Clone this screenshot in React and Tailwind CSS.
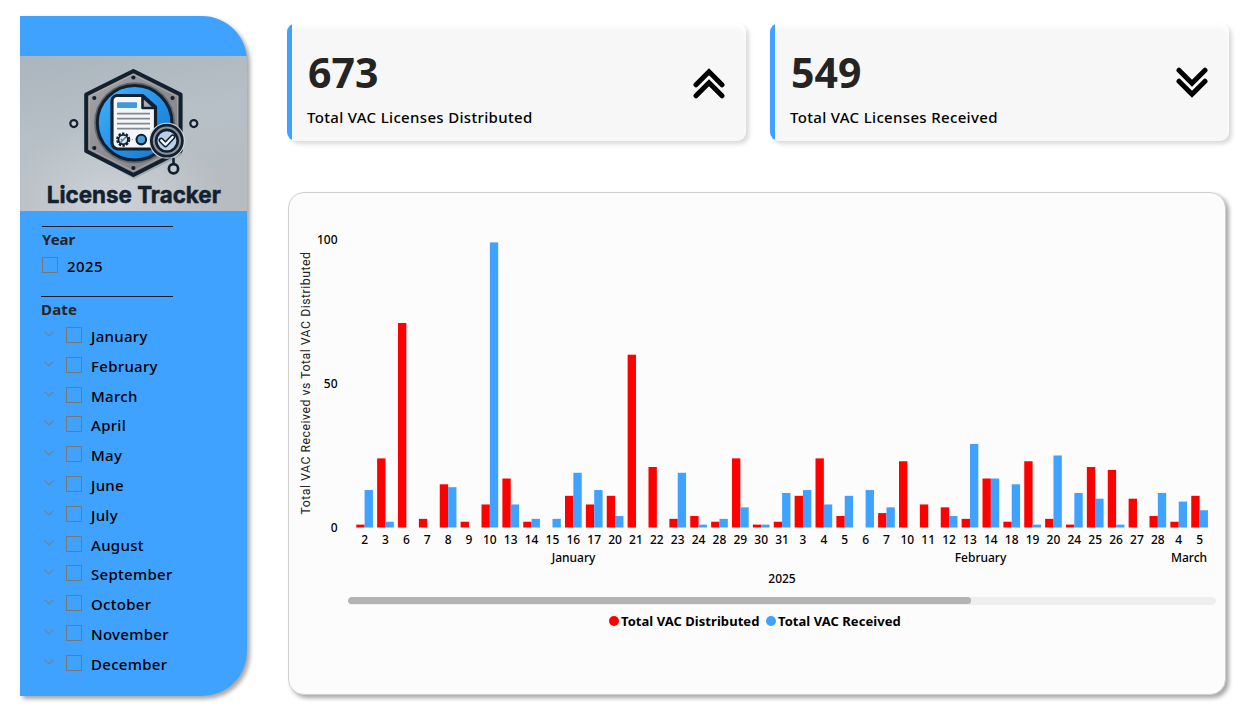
import React from "react";

const DATA = [
  [2, 1, 13], [3, 24, 2], [6, 71, 0], [7, 3, 0], [8, 15, 14], [9, 2, 0], [10, 8, 99],
  [13, 17, 8], [14, 2, 3], [15, 0, 3], [16, 11, 19], [17, 8, 13], [20, 11, 4], [21, 60, 0],
  [22, 21, 0], [23, 3, 19], [24, 4, 1], [28, 2, 3], [29, 24, 7], [30, 1, 1], [31, 2, 12],
  [3, 11, 13], [4, 24, 8], [5, 4, 11], [6, 0, 13], [7, 5, 7], [10, 23, 0], [11, 8, 0],
  [12, 7, 4], [13, 3, 29], [14, 17, 17], [18, 2, 15], [19, 23, 1], [20, 3, 25], [24, 1, 12],
  [25, 21, 10], [26, 20, 1], [27, 10, 0], [28, 4, 12], [4, 2, 9], [5, 11, 6],
];

const MONTHS = [
  "January", "February", "March", "April", "May", "June",
  "July", "August", "September", "October", "November", "December",
];

function Logo() {
  return (
    <svg className="block h-[155px] w-full" viewBox="20 56 227 155" preserveAspectRatio="none">
      <defs>
        <linearGradient id="wall" x1="0" y1="0" x2="0.3" y2="1">
          <stop offset="0" stopColor="#abb5bd" />
          <stop offset="0.55" stopColor="#b7c0c7" />
          <stop offset="1" stopColor="#b6bcc0" />
        </linearGradient>
        <radialGradient id="glow" cx="0.4" cy="0.95" r="0.5">
          <stop offset="0" stopColor="#cdd3d8" />
          <stop offset="1" stopColor="#cdd3d8" stopOpacity="0" />
        </radialGradient>
        <linearGradient id="steel" x1="0" y1="0" x2="1" y2="1">
          <stop offset="0" stopColor="#aaa7a7" />
          <stop offset="0.5" stopColor="#8d8c90" />
          <stop offset="1" stopColor="#838287" />
        </linearGradient>
        <linearGradient id="disc" x1="0" y1="0" x2="1" y2="1">
          <stop offset="0" stopColor="#49b5fb" />
          <stop offset="0.5" stopColor="#2493ea" />
          <stop offset="1" stopColor="#1674cb" />
        </linearGradient>
      </defs>
      <rect x="20" y="56" width="227" height="155" fill="url(#wall)" />
      <rect x="20" y="56" width="227" height="155" fill="url(#glow)" />
      <path d="M134 72 L182 94 V155 L134 179 L88 153 Z" fill="#8f999f" opacity="0.6" />
      <path d="M133.400 71 L180.600 94.500 V151 L133.400 175 L86.200 151 V94.500 Z" fill="url(#steel)" stroke="#12202f" strokeWidth="4" strokeLinejoin="round" />
      <path d="M133.400 74.500 L177.500 96.500 V149 L133.400 171 L89.200 149 V96.500 Z" fill="none" stroke="#c3c1bf" strokeWidth="0.8" opacity="0.6" />
      <circle cx="134.600" cy="122.800" r="40.500" fill="#5f6670" />
      <circle cx="134.600" cy="122.800" r="37.300" fill="url(#disc)" stroke="#12202f" strokeWidth="3" />
      {[[133.4, 77.5], [94.3, 98], [172.5, 98], [94.3, 148], [133.4, 168]].map(([x, y]) => (
        <circle key={x + "-" + y} cx={x} cy={y} r="2.100" fill="#12202f" />
      ))}
      <circle cx="73.800" cy="123.600" r="3.500" fill="#c5ccd1" stroke="#12202f" strokeWidth="2.200" />
      <circle cx="193.800" cy="123.600" r="3.500" fill="#c5ccd1" stroke="#12202f" strokeWidth="2.200" />
      <path d="M117 95.500 H142.500 L155.500 107 V143 a6 6 0 0 1 -6 6 H118 a6 6 0 0 1 -6 -6 V101 a5.500 5.500 0 0 1 5 -5.500 Z" fill="#f4f7f9" stroke="#12202f" strokeWidth="3.200" strokeLinejoin="round" />
      <path d="M142.500 96.500 V108 H155 Z" fill="#a9adb2" stroke="#12202f" strokeWidth="2.600" strokeLinejoin="round" />
      <rect x="117" y="102.300" width="20" height="5.800" rx="0.800" fill="#3f9ae0" />
      {[113.6, 118.6, 123.6, 128.6].map((y) => (
        <path key={y} d={`M117 ${y} H150`} stroke="#85898e" strokeWidth="1.900" />
      ))}
      <circle cx="123.200" cy="139.600" r="6" fill="none" stroke="#12202f" strokeWidth="2.200" strokeDasharray="2.400 1.370" />
      <circle cx="123.200" cy="139.600" r="4.700" fill="#dcecf7" stroke="#12202f" strokeWidth="1.800" />
      <path d="M120.500 142.500 L126 137 M121 139 l2 2" stroke="#5c7d99" strokeWidth="1.700" />
      <circle cx="132.300" cy="139.600" r="0.600" fill="#7e8b96" />
      <circle cx="141.300" cy="139.600" r="4.800" fill="#45a0df" stroke="#12202f" strokeWidth="2.100" />
      <path d="M173.500 158 V164" stroke="#12202f" strokeWidth="2.600" />
      <circle cx="173.500" cy="168.700" r="4.600" fill="#c2ccd3" stroke="#12202f" strokeWidth="2.700" />
      <circle cx="166.900" cy="140.700" r="18" fill="#d5dadd" />
      <circle cx="166.900" cy="140.700" r="15.500" fill="#8b9299" stroke="#12202f" strokeWidth="2.800" />
      <circle cx="166.900" cy="140.700" r="10.800" fill="#b6d1e9" stroke="#12202f" strokeWidth="2.600" />
      <path d="M161.300 140.300 L165.500 144.600 L172.700 137" fill="none" stroke="#12202f" strokeWidth="5.400" strokeLinecap="round" strokeLinejoin="round" />
      <path d="M161.300 140.300 L165.500 144.600 L172.700 137" fill="none" stroke="#eff4f8" strokeWidth="2.400" strokeLinecap="round" strokeLinejoin="round" />
      <text x="46.800" y="203.400" textLength="174" lengthAdjust="spacingAndGlyphs" fill="#12202f" stroke="#12202f" strokeWidth="0.500" className="font-['Inter'] text-[23.5px] font-bold">
        License Tracker
      </text>
    </svg>
  );
}

function Checkbox() {
  return <span className="block size-4 shrink-0 border border-[#777]" />;
}

function Sidebar() {
  return (
    <aside className="h-[680px] w-[227px] shrink-0 overflow-hidden rounded-r-[45px] bg-[#40a2ff] pt-10 shadow-[3px_3px_4px_rgba(0,0,0,0.35)]">
      <Logo />
      <div className="pt-[15px] pl-[22px]">
        <div className="w-[131px] border-t border-[#111c2a]" />
        <h2 className="mt-[2px] text-[15px] leading-5 font-bold text-[#252423]">Year</h2>
        <div className="mt-[6px] flex h-5 items-center gap-[9px]">
          <Checkbox />
          <span className="pt-[2px] text-[15px] leading-5 font-medium tracking-[0.4px]">2025</span>
        </div>
      </div>
      <div className="pt-[21px] pl-[21px]">
        <div className="w-[132px] border-t border-[#111c2a]" />
        <h2 className="mt-[2px] text-[15px] leading-5 font-bold tracking-[0.2px] text-[#252423]">Date</h2>
        <ul className="mt-px">
          {MONTHS.map((m) => (
            <li key={m} className="flex h-[29.82px] items-center">
              <svg className="-mt-[2px] ml-[3px] h-[6px] w-[10px] shrink-0" viewBox="0 0 10 6">
                <path d="M0.500 0.500 L5 5 L9.500 0.500" fill="none" stroke="#6e8497" strokeWidth="1.200" />
              </svg>
              <span className="ml-3 pr-[9px]"><Checkbox /></span>
              <span className="pt-[2px] text-[15px] leading-5 font-medium tracking-[0.3px]">{m}</span>
            </li>
          ))}
        </ul>
      </div>
    </aside>
  );
}

function DoubleChevron({ down }) {
  return (
    <svg className="h-[31px] w-8" viewBox="0 0 32 31">
      <g transform={down ? "rotate(180 16 15.500)" : undefined} fill="none" stroke="#000" strokeWidth="5" strokeLinecap="round">
        <path d="M3 16.800 L16 3.800 L29 16.800" />
        <path d="M3 27.800 L16 14.800 L29 27.800" />
      </g>
    </svg>
  );
}

function StatCard({ value, label, down }) {
  return (
    <section className="flex h-[118px] w-[459px] overflow-hidden rounded-[9px] bg-[#f7f7f7] pr-[21px] shadow-[3px_3px_4px_rgba(0,0,0,0.15),inset_0_4px_4px_#fff]">
      <div className="w-[5px] bg-[#40a2ff]" />
      <div className="flex-1 pt-[23px] pl-[15px]">
        <div className="pl-px text-[41px] leading-[52px] font-bold text-[#252423]">{value}</div>
        <div className="mt-[9px] text-[15px] leading-5 font-medium tracking-[0.33px] text-black">{label}</div>
      </div>
      <div className={down ? "pt-[44px]" : "pt-[45px]"}>
        <DoubleChevron down={down} />
      </div>
    </section>
  );
}

const PITCH = 20.875;
const BASE = 527.5;
const UNIT = 2.88;

function Plot() {
  return (
    <svg className="block h-[404px] w-[936px]" viewBox="289 193 936 404">
      <text transform="translate(309.500 514.500) rotate(-90)" textLength="262.500" fill="#252423" className="font-['Roboto'] text-[12.3px]">
        Total VAC Received vs Total VAC Distributed
      </text>
      <g className="text-[12px] font-medium" fill="#000">
        {[0, 50, 100].map((v) => (
          <text key={v} x="337.500" y={BASE - v * UNIT + 4.5} textAnchor="end">{v}</text>
        ))}
        {DATA.map(([day, sent, got], i) => {
          const x = 364.6 + i * PITCH;
          return (
            <g key={i}>
              <rect x={x - 8.35} y={BASE - sent * UNIT} width="8.350" height={sent * UNIT} fill="#ff0000" />
              <rect x={x} y={BASE - got * UNIT} width="8.350" height={got * UNIT} fill="#40a2ff" />
              <text x={x} y="544" textAnchor="middle">{day}</text>
            </g>
          );
        })}
        <text x="573.500" y="562" textAnchor="middle">January</text>
        <text x="980.500" y="562" textAnchor="middle">February</text>
        <text x="1189" y="562" textAnchor="middle">March</text>
        <text x="782" y="583" textAnchor="middle">2025</text>
      </g>
    </svg>
  );
}

function ChartCard() {
  return (
    <section className="ml-[1px] h-[503px] w-[938px] rounded-[16px] border border-[#d0d0d0] bg-[#fcfcfc] shadow-[3px_3px_4px_rgba(0,0,0,0.35)]">
      <Plot />
      <div className="ml-[59px] h-2 w-[868px] overflow-hidden rounded-full bg-[#eeeeee]">
        <div className="h-[7px] w-[623px] rounded-full bg-[#b3b3b3]" />
      </div>
      <div className="mt-[7px] flex items-center pl-[320px] text-[13px] leading-[18px] font-bold tracking-[0.05px] text-black">
        <span className="mr-[2px] size-[10px] rounded-full bg-[#ff0000]" />
        <span className="w-[145px] whitespace-nowrap">Total VAC Distributed</span>
        <span className="mr-[2px] size-[10px] rounded-full bg-[#40a2ff]" />
        <span className="whitespace-nowrap">Total VAC Received</span>
      </div>
    </section>
  );
}

export default function App() {
  return (
    <div className="flex h-[713px] w-[1249px] overflow-hidden bg-white pt-4 pl-5 font-['Noto_Sans','Open_Sans',sans-serif] text-black">
      <Sidebar />
      <main className="pt-[7px] pl-10">
        <div className="flex gap-[24px]">
          <StatCard value="673" label="Total VAC Licenses Distributed" />
          <StatCard value="549" label="Total VAC Licenses Received" down />
        </div>
        <div className="pt-[51px]">
          <ChartCard />
        </div>
      </main>
    </div>
  );
}
